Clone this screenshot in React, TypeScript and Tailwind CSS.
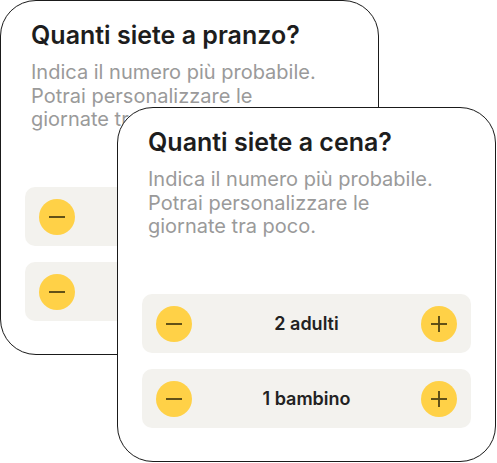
type Counter = { label: string };

const counters: Counter[] = [{ label: "2 adulti" }, { label: "1 bambino" }];

function RoundButton({ kind }: { kind: "minus" | "plus" }) {
  return (
    <button className="size-9 shrink-0 rounded-full bg-[#ffd147] flex items-center justify-center text-[#5a4a16]">
      <svg width="16" height="16" viewBox="0 0 16 16" fill="none" stroke="currentColor" strokeWidth="1.9">
        <path d="M0 8h16" />
        {kind === "plus" && <path d="M8 0v16" />}
      </svg>
    </button>
  );
}

function CounterRow({ label }: Counter) {
  return (
    <div className="h-[59px] rounded-[10px] bg-[#f3f2ee] px-[14px] flex items-center justify-between">
      <RoundButton kind="minus" />
      <span className="text-[18px] font-semibold text-[#222222]">{label}</span>
      <RoundButton kind="plus" />
    </div>
  );
}

function MealCard({ title }: { title: string }) {
  return (
    <div className="w-[379px] h-[355px] rounded-[36px] border border-[#1a1a1a] bg-white flex flex-col px-6 pt-[19px] pb-[33px]">
      <div className="px-[6px]">
        <h2 className="text-[25px] leading-[30px] font-semibold text-[#1d1d1d]">
          {title}
        </h2>
        <p className="mt-[11px] text-[20px] leading-[23.5px] text-[#9a9a9a]">
          Indica il numero più probabile.
          <br />
          Potrai personalizzare le
          <br />
          giornate tra poco.
        </p>
      </div>
      <div className="mt-auto flex flex-col gap-4">
        {counters.map((c) => (
          <CounterRow key={c.label} label={c.label} />
        ))}
      </div>
    </div>
  );
}

export default function App() {
  return (
    <div
      className="relative w-[497px] h-[463px] bg-white overflow-hidden"
      style={{ fontFamily: "Inter, 'Noto Sans', sans-serif" }}
    >
      {/* carte sovrapposte */}
      <div className="absolute left-0 top-0">
        <MealCard title="Quanti siete a pranzo?" />
      </div>
      <div className="absolute left-[117px] top-[107px]">
        <MealCard title="Quanti siete a cena?" />
      </div>
    </div>
  );
}
